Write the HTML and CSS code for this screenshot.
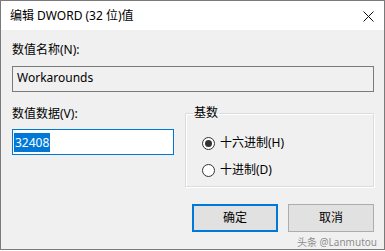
FILE: index.html
```html
<!DOCTYPE html>
<html lang="zh">
<head>
<meta charset="utf-8">
<link rel="stylesheet" href="styles.css">
</head>
<body>
<div class="window">
  <div class="titlebar">
    <span class="title">编辑 DWORD (32 位)值</span>
    <svg class="close" width="11" height="11" viewBox="0 0 11 11"><path d="M0.5 0.5 L10.5 10.5 M10.5 0.5 L0.5 10.5" stroke="#111" stroke-width="1" fill="none"/></svg>
  </div>
  <div class="content">
    <div class="label first">数值名称(N):</div>
    <div class="textbox readonly">Workarounds</div>
    <div class="row">
      <div class="col-left">
        <div class="label">数值数据(V):</div>
        <div class="textbox active"><span class="sel">32408</span></div>
      </div>
      <fieldset class="group">
        <legend>基数</legend>
        <div class="radio-row"><span class="radio checked"></span><span>十六进制(H)</span></div>
        <div class="radio-row"><span class="radio"></span><span>十进制(D)</span></div>
      </fieldset>
    </div>
    <div class="buttons">
      <div class="btn default">确定</div>
      <div class="btn">取消</div>
    </div>
  </div>
  <div class="watermark">头条 @Lanmutou</div>
</div>
</body>
</html>
```
FILE: styles.css
```css
html, body {
  margin: 0;
  padding: 0;
  background: #ffffff;
}
body {
  width: 385px;
  height: 251px;
  overflow: hidden;
  font-family: "Noto Sans", "Noto Sans CJK SC", sans-serif;
  font-size: 12px;
  color: #000;
}
.window {
  position: relative;
  box-sizing: border-box;
  width: 385px;
  height: 250px;
  border: 1px solid #7a7a7a;
  background: #f0f0f0;
  display: flex;
  flex-direction: column;
}
.titlebar {
  height: 29px;
  background: #ffffff;
  display: flex;
  align-items: center;
  justify-content: space-between;
  padding: 0 9px 0 9px;
  flex: none;
}
.title {
  line-height: 16px;
  margin-top: 1px;
}
.close {
  display: block;
  margin-top: 1px;
  margin-right: 1px;
}
.content {
  padding: 0 10px 0 11px;
  display: flex;
  flex-direction: column;
}
.label {
  line-height: 16px;
  height: 16px;
}
.label.first {
  margin-top: 12px;
}
.textbox {
  box-sizing: border-box;
  height: 26px;
  line-height: 22px;
  padding: 0 4px;
  background: #f0f0f0;
  border: 1px solid #7a7a7a;
}
.readonly {
  margin-top: 8px;
}
.row {
  display: grid;
  grid-template-columns: 162px 1fr;
  column-gap: 11px;
  margin-top: 13px;
}
.col-left {
  display: flex;
  flex-direction: column;
  padding-top: 1px;
}
.col-left .label {
  margin-bottom: 7px;
}
.active {
  background: #ffffff;
  border: 1px solid #0078d7;
  padding: 0 1px;
  display: flex;
  align-items: center;
}
.sel {
  background: #0078d7;
  color: #ffffff;
  line-height: 19px;
  padding: 0 1px;
}
.group {
  margin: 0;
  padding: 14px 0 0 16px;
  height: 82px;
  box-sizing: border-box;
  border: 1px solid #dcdcdc;
  box-shadow: inset 1px 1px 0 #ffffff, 1px 1px 0 #ffffff;
  min-width: 0;
}
.group legend {
  padding: 0 1px;
  margin-left: -9px;
  line-height: 16px;
}
.radio-row {
  display: flex;
  align-items: center;
  height: 16px;
  gap: 5px;
  line-height: 16px;
}
.radio-row + .radio-row {
  margin-top: 11px;
}
.radio {
  box-sizing: border-box;
  width: 13px;
  height: 13px;
  border-radius: 50%;
  border: 1px solid #333333;
  background: #ffffff;
  display: flex;
  align-items: center;
  justify-content: center;
}
.radio.checked::after {
  content: "";
  width: 7px;
  height: 7px;
  border-radius: 50%;
  background: #333333;
}
.buttons {
  display: flex;
  justify-content: flex-end;
  gap: 10px;
  margin-top: 17px;
}
.btn {
  box-sizing: border-box;
  width: 86px;
  height: 28px;
  background: #e1e1e1;
  border: 1px solid #adadad;
  display: flex;
  align-items: center;
  justify-content: center;
  line-height: 16px;
}
.btn.default {
  border: 2px solid #0078d7;
}
.watermark {
  position: absolute;
  left: 296px;
  top: 235px;
  font-size: 10px;
  line-height: 12px;
  color: #8a8a8a;
  text-shadow: 0 0 1px #ffffff;
  white-space: nowrap;
}
```
